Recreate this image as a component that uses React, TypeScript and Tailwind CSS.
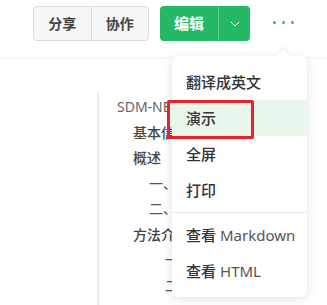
import React from "react";

const menu = [
  { label: "翻译成英文" },
  { label: "演示", active: true },
  { label: "全屏" },
  { label: "打印" },
];

const toc = [
  { text: "SDM-NET 使用文档", indent: "pl-0", cls: "text-[#666] font-normal" },
  { text: "基本信息", indent: "pl-[16px]", cls: "text-[#444] font-medium" },
  { text: "概述", indent: "pl-[16px]", cls: "text-[#444] font-medium" },
  { text: "一、背景介绍", indent: "pl-[32px]", cls: "text-[#555] font-normal" },
  { text: "二、功能说明", indent: "pl-[32px]", cls: "text-[#555] font-normal" },
  { text: "方法介绍", indent: "pl-[16px]", cls: "text-[#444] font-medium" },
  { text: "一、训练方法", indent: "pl-[48px]", cls: "text-[#555] font-normal" },
  { text: "二、推理方法", indent: "pl-[48px]", cls: "text-[#555] font-normal" },
];

export default function App() {
  return (
    <div className="relative w-[327px] h-[305px] overflow-hidden bg-white font-['Noto_Sans','Noto_Sans_CJK_SC',sans-serif]">
      {/* header */}
      <div className="h-[57px] flex items-start pt-[6px] pl-[33px] shadow-[0_1px_2px_rgba(0,0,0,0.06)]">
        <div className="flex w-[116px] h-[35px] rounded-[4px] border border-[#dcdcdc] bg-[#f7f7f7] text-[14px] font-bold text-[#444]">
          <button className="flex-1 flex items-center justify-center">分享</button>
          <div className="w-px bg-[#dcdcdc]" />
          <button className="flex-1 flex items-center justify-center">协作</button>
        </div>
        <div className="ml-[11px] flex w-[90px] h-[35px] rounded-[4px] bg-[#25b865] text-white">
          <button className="w-[58px] flex items-center justify-center text-[15px] font-bold">编辑</button>
          <div className="w-px bg-[rgba(255,255,255,0.3)]" />
          <button className="flex-1 flex items-center justify-center">
            <svg width="10" height="6" viewBox="0 0 10 6" fill="none">
              <path d="M1 1l4 4 4-4" stroke="white" strokeWidth="1" strokeLinecap="round" />
            </svg>
          </button>
        </div>
        <div className="ml-[23px] mt-[15px] flex gap-[6px]">
          <span className="w-[3px] h-[3px] rounded-full bg-[#25b865]" />
          <span className="w-[3px] h-[3px] rounded-full bg-[#25b865]" />
          <span className="w-[3px] h-[3px] rounded-full bg-[#25b865]" />
        </div>
      </div>

      {/* body / outline (clipped where the menu covers it) */}
      <div className="pt-[36px] pl-[97px]">
        <div className="w-[75px] overflow-hidden border-l-2 border-[#ececec] pl-[18px] pt-px h-[220px] text-[14px]">
          {toc.map((t) => (
            <div key={t.text} className={`h-[25.5px] flex items-center whitespace-nowrap ${t.indent} ${t.cls}`}>
              {t.text}
            </div>
          ))}
        </div>
      </div>

      {/* dropdown menu */}
      <div className="absolute left-[172px] top-[56px] w-[135px] rounded-[6px] bg-white py-2 shadow-[0_2px_10px_rgba(0,0,0,0.12)]">
        <div className="absolute left-[106px] -top-[5px] w-[10px] h-[10px] rotate-45 bg-white shadow-[-2px_-2px_4px_rgba(0,0,0,0.05)]" />
        <div className="relative">
          {menu.map((m) => (
            <div
              key={m.label}
              className={`h-[36px] flex items-center pl-[14px] text-[15px] font-medium text-[#333] ${m.active ? "bg-[#e8f6ec]" : ""}`}
            >
              {m.label}
            </div>
          ))}
          <div className="my-1 h-px bg-[#e8e8e8]" />
          <div className="h-[36px] flex items-center pl-[14px] text-[15px] text-[#333]">
            <span className="font-medium">查看</span>
            <span className="ml-[4px] font-normal text-[#555]">Markdown</span>
          </div>
          <div className="h-[36px] flex items-center pl-[14px] text-[15px] text-[#333]">
            <span className="font-medium">查看</span>
            <span className="ml-[4px] font-normal text-[#555]">HTML</span>
          </div>
        </div>
      </div>

      {/* red annotation box */}
      <div className="absolute left-[167px] top-[100px] w-[87px] h-[39px] border-[3px] border-[#e8202a] rounded-[2px]" />
    </div>
  );
}
